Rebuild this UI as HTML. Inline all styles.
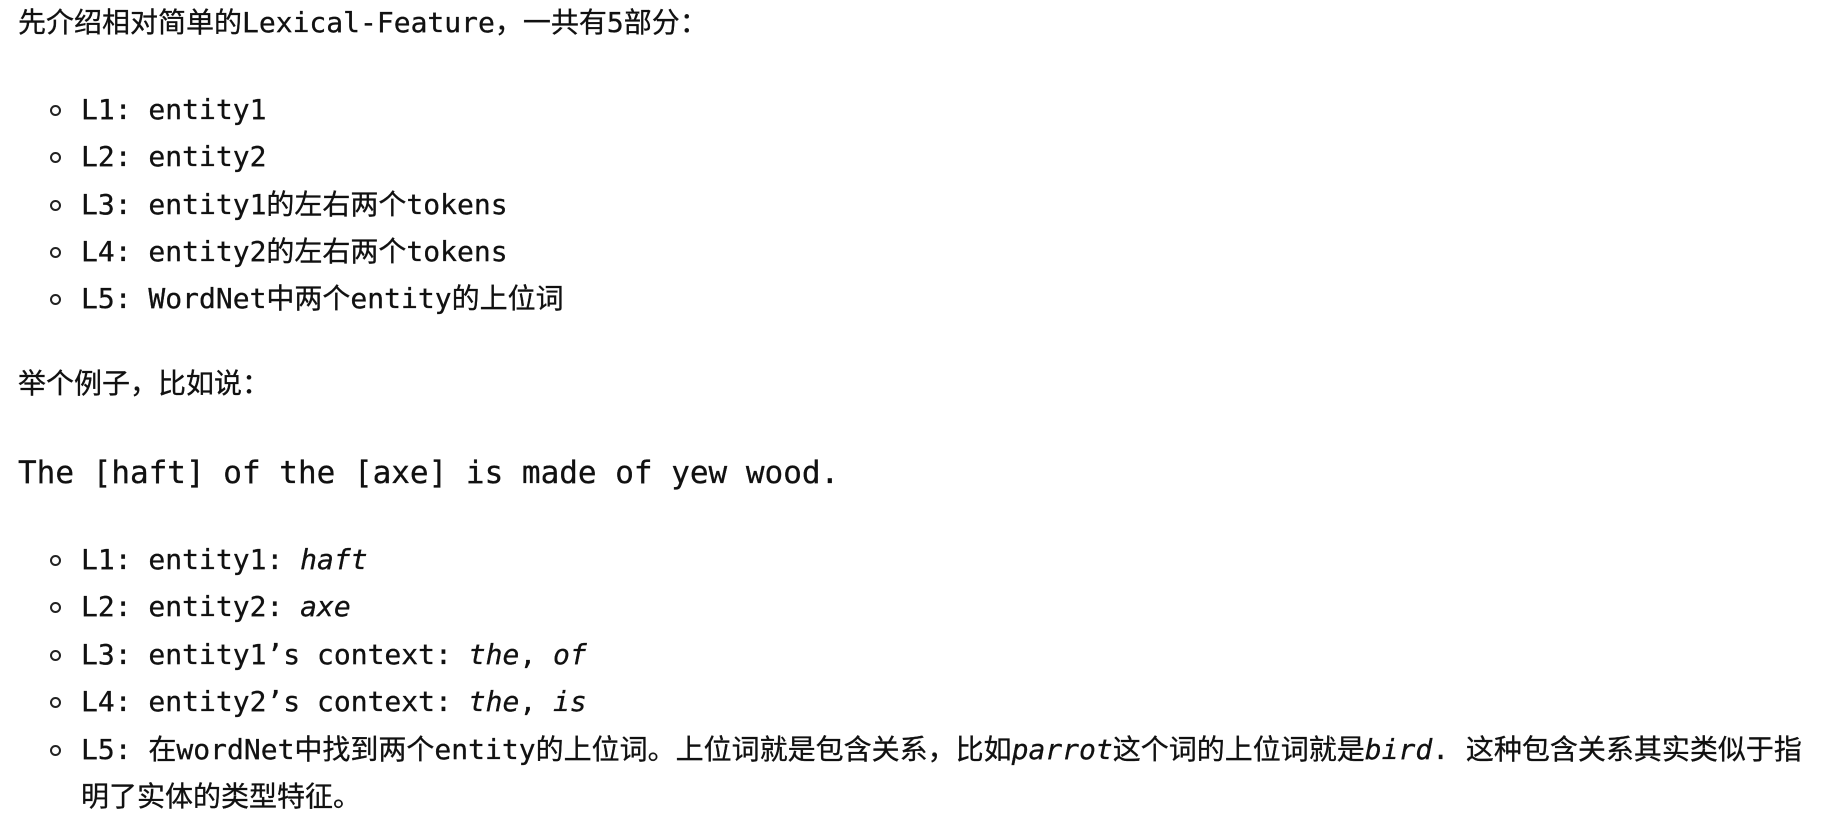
<!DOCTYPE html>
<html><head><meta charset="utf-8"><style>
body{margin:0;width:1823px;height:816px;background:#fff;overflow:hidden;}
.t{position:absolute;left:18px;white-space:nowrap;line-height:40px;height:40px;font-family:"DejaVu Sans Mono","Liberation Mono","Noto Sans CJK SC",monospace;font-size:28px;color:#111;-webkit-text-stroke:0.3px #111;}
.li{left:81px;}
.b{position:absolute;left:50px;width:7px;height:7px;border:2px solid #222;border-radius:50%;}
i{font-style:italic;}
</style></head><body>
<div class="t" style="top:3px">先介绍相对简单的Lexical-Feature，一共有5部分：</div>

<div class="b" style="top:105px"></div><div class="t li" style="top:90px">L1: entity1</div>
<div class="b" style="top:152px"></div><div class="t li" style="top:137px">L2: entity2</div>
<div class="b" style="top:200px"></div><div class="t li" style="top:185px">L3: entity1的左右两个tokens</div>
<div class="b" style="top:247px"></div><div class="t li" style="top:232px">L4: entity2的左右两个tokens</div>
<div class="b" style="top:294px"></div><div class="t li" style="top:279px">L5: WordNet中两个entity的上位词</div>

<div class="t" style="top:364px">举个例子，比如说：</div>
<div class="t" style="top:453px;font-size:31px">The [haft] of the [axe] is made of yew wood.</div>

<div class="b" style="top:555px"></div><div class="t li" style="top:540px">L1: entity1: <i>haft</i></div>
<div class="b" style="top:602px"></div><div class="t li" style="top:587px">L2: entity2: <i>axe</i></div>
<div class="b" style="top:650px"></div><div class="t li" style="top:635px">L3: entity1’s context: <i>the</i>, <i>of</i></div>
<div class="b" style="top:697px"></div><div class="t li" style="top:682px">L4: entity2’s context: <i>the</i>, <i>is</i></div>
<div class="b" style="top:745px"></div><div class="t li" style="top:730px">L5: 在wordNet中找到两个entity的上位词。上位词就是包含关系，比如<i>parrot</i>这个词的上位词就是<i>bird</i>. 这种包含关系其实类似于指</div>
<div class="t li" style="top:777px">明了实体的类型特征。</div>
</body></html>
